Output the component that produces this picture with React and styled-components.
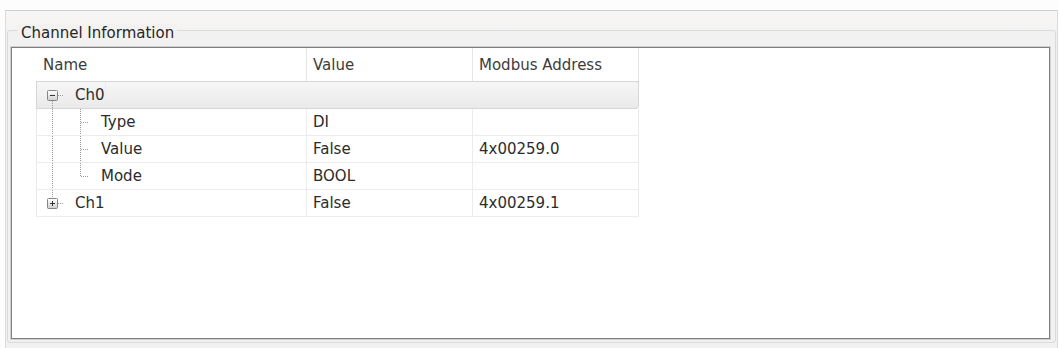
import React from 'react';
import styled, { createGlobalStyle } from 'styled-components';

const GlobalStyle = createGlobalStyle`
  html, body {
    margin: 0;
    padding: 0;
    background: #fdfdfe;
  }
  body {
    font-family: "DejaVu Sans", "Liberation Sans", sans-serif;
  }
`;

const COLS = '270px 166px 166px';
const GUIDE = '#9a9a9a';

const rows = [
  { id: 'type', name: 'Type', value: 'DI', address: '', last: false },
  { id: 'value', name: 'Value', value: 'False', address: '4x00259.0', last: false },
  { id: 'mode', name: 'Mode', value: 'BOOL', address: '', last: true },
];

export default function App() {
  return (
    <>
      <GlobalStyle />
      <Page>
        <TabPage>
          <GroupBox>
            <GroupLabel>Channel Information</GroupLabel>
            <Panel>
              <Table>
                <HeaderRow>
                  <HeaderCell $first>Name</HeaderCell>
                  <HeaderCell>Value</HeaderCell>
                  <HeaderCell>Modbus Address</HeaderCell>
                </HeaderRow>

                <GroupRow>
                  <NameCell>
                    <Expander open />
                    <NodeText>Ch0</NodeText>
                  </NameCell>
                </GroupRow>

                {rows.map((r) => (
                  <DataRow key={r.id}>
                    <NameCell>
                      <ChildGuide last={r.last} />
                      <NodeText>{r.name}</NodeText>
                    </NameCell>
                    <Cell>{r.value}</Cell>
                    <Cell>{r.address}</Cell>
                  </DataRow>
                ))}

                <DataRow>
                  <NameCell>
                    <Expander />
                    <NodeText>Ch1</NodeText>
                  </NameCell>
                  <Cell>False</Cell>
                  <Cell>4x00259.1</Cell>
                </DataRow>
              </Table>
            </Panel>
          </GroupBox>
        </TabPage>
      </Page>
    </>
  );
}

// +/- box of a tree node, with the guide lines around it
function Expander({ open }) {
  const id = open ? 'gOpen' : 'gClosed';
  return (
    <GuideSvg width="38" height="26" viewBox="0 0 38 26">
      <defs>
        <linearGradient id={id} x1="0" y1="0" x2="0" y2="1">
          <stop offset="0" stopColor="#ffffff" />
          <stop offset="1" stopColor="#cfcfcf" />
        </linearGradient>
      </defs>
      {open ? (
        <line x1="15.5" y1="19" x2="15.5" y2="26" stroke={GUIDE} strokeDasharray="1 1" />
      ) : (
        <line x1="15.5" y1="0" x2="15.5" y2="8" stroke={GUIDE} strokeDasharray="1 1" />
      )}
      <line x1="21" y1="13.5" x2="27" y2="13.5" stroke={GUIDE} strokeDasharray="1 1" />
      <rect x="10.5" y="8.5" width="10" height="10" rx="1" fill={`url(#${id})`} stroke="#848484" />
      <line x1="13" y1="13.5" x2="18" y2="13.5" stroke="#333333" />
      {!open && <line x1="15.5" y1="11" x2="15.5" y2="16" stroke="#333333" />}
    </GuideSvg>
  );
}

function ChildGuide({ last }) {
  return (
    <GuideSvg width="64" height="26" viewBox="0 0 64 26">
      <line x1="15.5" y1="0" x2="15.5" y2="26" stroke={GUIDE} strokeDasharray="1 1" />
      <line x1="43.5" y1="0" x2="43.5" y2={last ? 14 : 26} stroke={GUIDE} strokeDasharray="1 1" />
      <line x1="44" y1="13.5" x2="52" y2="13.5" stroke={GUIDE} strokeDasharray="1 1" />
    </GuideSvg>
  );
}

const Page = styled.div`
  width: 1059px;
  height: 348px;
  box-sizing: border-box;
  padding: 10px 1px 0 5px;
  overflow: hidden;
`;

const TabPage = styled.div`
  height: 100%;
  box-sizing: border-box;
  border: 1px solid #d5dce3;
  border-top-color: #c4d0dc;
  border-bottom: none;
  background: linear-gradient(#f8f6f5 0, #f5f4f3 17px, #f1f1f1 21px, #f1f1f1 100%);
  padding: 19px 1px 0 1px;
`;

const GroupBox = styled.div`
  position: relative;
  border: 1px solid #d6dbe0;
  border-radius: 3px;
  padding: 16px 5px 3px 3px;
`;

// caption sits over the top border of the group box
const GroupLabel = styled.div`
  position: absolute;
  top: -7px;
  left: 10px;
  padding: 0 3px;
  background: #f3f2f1;
  font-size: 15px;
  line-height: 18px;
  color: #262626;
  white-space: nowrap;
`;

const Panel = styled.div`
  height: 292px;
  box-sizing: border-box;
  border: 1px solid #7e7e7e;
  box-shadow: 0 0 0 1px #d0d0d0;
  background: #ffffff;
  padding-left: 24px;
`;

const Table = styled.div`
  width: 603px;
  display: flex;
  flex-direction: column;
  font-size: 15px;
  color: #2c2c2c;
`;

const HeaderRow = styled.div`
  display: grid;
  grid-template-columns: 271px 166px 166px;
  height: 34px;
  box-sizing: border-box;
  border-bottom: 1px solid #d6d6d6;
`;

const HeaderCell = styled.div`
  display: flex;
  align-items: center;
  padding-left: ${(p) => (p.$first ? '7px' : '6px')};
  border-right: 1px solid #e6e6e6;
  color: #3c3c3c;
  white-space: nowrap;
`;

const GroupRow = styled.div`
  height: 28px;
  margin-top: -1px;
  box-sizing: border-box;
  border: 1px solid #d6d6d6;
  border-radius: 0 3px 3px 0;
  background: linear-gradient(#f6f6f6, #eaeaea);
  display: flex;
`;

const DataRow = styled.div`
  display: grid;
  grid-template-columns: ${COLS};
  height: 27px;
  box-sizing: border-box;
  border-left: 1px solid #e9e9e9;
  border-bottom: 1px solid #ececec;
`;

const Cell = styled.div`
  display: flex;
  align-items: center;
  padding-left: 6px;
  border-right: 1px solid #ececec;
  white-space: nowrap;
`;

const NameCell = styled(Cell)`
  padding-left: 0;
`;

const GuideSvg = styled.svg`
  display: block;
  flex: none;
`;

const NodeText = styled.span`
  white-space: nowrap;
`;
